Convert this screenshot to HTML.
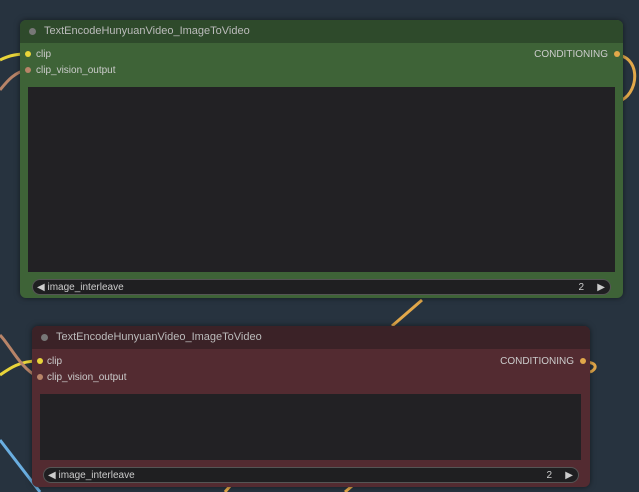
<!DOCTYPE html>
<html><head><style>
body{margin:0;width:639px;height:492px;overflow:hidden;background:#27333f;font-family:"Liberation Sans",sans-serif;position:relative}
.n{position:absolute;border-radius:6px;box-shadow:0 0 6px rgba(0,0,0,.5)}
.t{position:absolute;left:0;right:0;top:0;height:23px;border-radius:6px 6px 0 0;color:#bbb;font-size:11px;line-height:23px;padding-left:24px}
.t:before{content:"";position:absolute;left:9px;top:8px;width:7px;height:7px;border-radius:50%;background:#777}
.l{position:absolute;font-size:10px;color:#ccc}
.d{position:absolute;width:6px;height:6px;border-radius:50%}
.ta{position:absolute;background:#222124}
.w{position:absolute;height:16px;border-radius:8px;background:#1f1f21;border:1px solid #555;font-size:10px;color:#ccc;line-height:16px;box-sizing:border-box}
</style></head><body>
<svg width="639" height="492" style="position:absolute;left:0;top:0">
<path d="M0 60 C10 55 18 54 27 54" stroke="#e8d43a" stroke-width="3" fill="none"/>
<path d="M0 90 C8 80 15 72 27 70" stroke="#b88468" stroke-width="3" fill="none"/>
<path d="M615 55 C640 55 640 90 622 100" stroke="#e2a84a" stroke-width="3" fill="none"/>
<path d="M422 300 L392 326" stroke="#e2a84a" stroke-width="3" fill="none"/>
<path d="M583 362 C600 362 596 370 590 372" stroke="#e2a84a" stroke-width="3" fill="none"/>
<path d="M0 375 C10 368 20 361 38 361" stroke="#e8d43a" stroke-width="3" fill="none"/>
<path d="M0 335 C10 345 20 368 38 377" stroke="#b88468" stroke-width="3" fill="none"/>
<path d="M0 440 L40 492" stroke="#6aaee0" stroke-width="3" fill="none"/>
<path d="M225 492 L230 486 M345 492 L352 486" stroke="#e2a84a" stroke-width="3" fill="none"/>
</svg>
<div class="n" style="left:20px;top:20px;width:603px;height:278px;background:#3e6337">
 <div class="t" style="background:#2e4a2b">TextEncodeHunyuanVideo_ImageToVideo</div>
 <div class="d" style="left:5px;top:31px;background:#e8d43a"></div><div class="l" style="left:16px;top:29px">clip</div>
 <div class="d" style="left:5px;top:47px;background:#b88468"></div><div class="l" style="left:16px;top:45px">clip_vision_output</div>
 <div class="l" style="right:15px;top:29px">CONDITIONING</div><div class="d" style="right:3px;top:31px;background:#e2a84a"></div>
 <div class="ta" style="left:8px;top:67px;width:587px;height:185px"></div>
 <div class="w" style="left:12px;top:259px;width:579px"><span style="position:absolute;left:4px">◀ image_interleave</span><span style="position:absolute;right:26px">2</span><span style="position:absolute;right:5px">▶</span></div>
</div>
<div class="n" style="left:32px;top:326px;width:558px;height:161px;background:#532b31">
 <div class="t" style="background:#3b2227">TextEncodeHunyuanVideo_ImageToVideo</div>
 <div class="d" style="left:5px;top:32px;background:#e8d43a"></div><div class="l" style="left:15px;top:30px">clip</div>
 <div class="d" style="left:5px;top:48px;background:#b88468"></div><div class="l" style="left:15px;top:46px">clip_vision_output</div>
 <div class="l" style="right:16px;top:30px">CONDITIONING</div><div class="d" style="right:4px;top:32px;background:#e2a84a"></div>
 <div class="ta" style="left:8px;top:68px;width:541px;height:66px"></div>
 <div class="w" style="left:11px;top:141px;width:536px"><span style="position:absolute;left:4px">◀ image_interleave</span><span style="position:absolute;right:26px">2</span><span style="position:absolute;right:5px">▶</span></div>
</div>
</body></html>
